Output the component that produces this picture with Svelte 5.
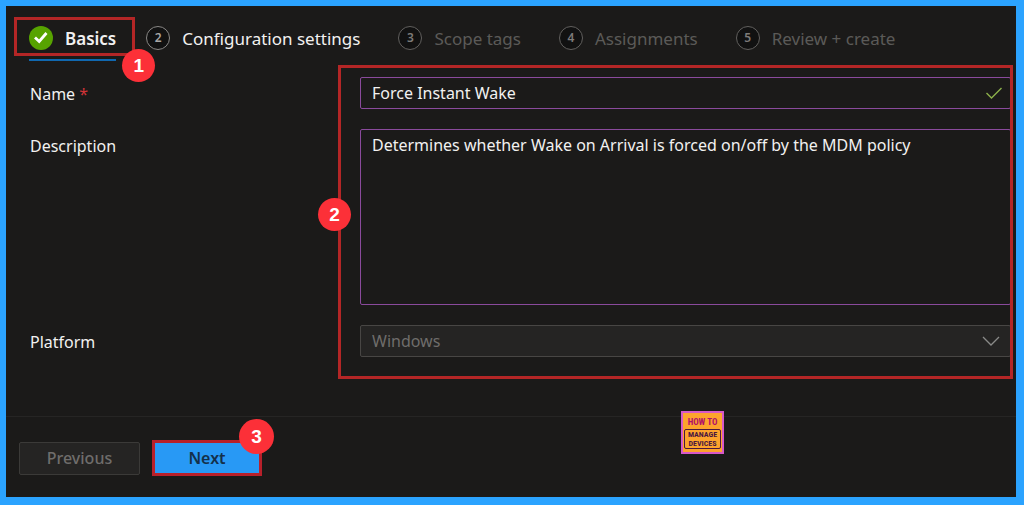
<script lang="ts">
    type Step = { label: string; state: "done" | "open" | "locked" };

    const steps: Step[] = [
        { label: "Basics", state: "done" },
        { label: "Configuration settings", state: "open" },
        { label: "Scope tags", state: "locked" },
        { label: "Assignments", state: "locked" },
        { label: "Review + create", state: "locked" },
    ];

    let name = $state("Force Instant Wake");
    let description = $state("Determines whether Wake on Arrival is forced on/off by the MDM policy");
    let platform = $state("Windows");
</script>

<main class="wizard">
    <nav class="steps">
        {#each steps as step, i}
            <button class="step {step.state}" disabled={step.state === "locked"}>
                {#if step.state === "done"}
                    <svg class="dot" viewBox="0 0 24 24" aria-hidden="true">
                        <circle cx="12" cy="12" r="12" fill="#57a300" />
                        <path d="M6 11.5l4.2 4 7.3-8.5" fill="none" stroke="#fff" stroke-width="2.8" />
                    </svg>
                {:else}
                    <span class="dot number">{i + 1}</span>
                {/if}
                <span class="text">{step.label}</span>
                {#if step.state === "done"}
                    <span class="mark mark-step"><b class="badge">1</b></span>
                {/if}
            </button>
        {/each}
    </nav>

    <form class="form">
        <label for="name">Name <span class="required">*</span></label>
        <div class="field">
            <input id="name" type="text" bind:value={name} />
            <svg class="tick" viewBox="0 0 16 12" aria-hidden="true">
                <path d="M0.5 6l5 5 10-10" fill="none" stroke="#8cb04a" stroke-width="1.4" />
            </svg>
        </div>

        <label for="description">Description</label>
        <textarea id="description" bind:value={description}></textarea>

        <label for="platform">Platform</label>
        <div class="field">
            <select id="platform" bind:value={platform} disabled>
                <option>Windows</option>
            </select>
            <svg class="chevron" viewBox="0 0 18 10" aria-hidden="true">
                <path d="M1 1l8 8 8-8" fill="none" stroke="#8a8a88" stroke-width="1.3" />
            </svg>
        </div>
        <div class="mark mark-form"><b class="badge">2</b></div>
    </form>

    <footer class="footer">
        <button class="btn" disabled>Previous</button>
        <div class="next">
            <button class="btn primary">Next</button>
            <b class="badge">3</b>
        </div>
        <div class="logo">
            <span>HOW TO</span>
            <span class="plate">MANAGE<br />DEVICES</span>
        </div>
    </footer>
</main>

<style>
    :global(body) { margin: 0; background: #2ba3ff; }
    .wizard { box-sizing: border-box; min-height: 100vh; border: solid #2ba3ff; border-width: 6px 8px 8px 6px; background: #1b1a19; color: #f2f1f0; font-family: "Noto Sans", "Open Sans", sans-serif; font-size: 16px; line-height: 24px; }
    button, input, textarea, select { font: inherit; color: inherit; box-sizing: border-box; margin: 0; }

    .steps { display: flex; gap: 38px; padding: 18px 24px 0 23px; font-size: 17px; }
    .step { position: relative; display: flex; align-items: center; gap: 12px; height: 37px; padding: 0 0 10px; border: 0; background: none; white-space: nowrap; }
    .step.done { margin-right: -8px; padding-bottom: 8px; font-weight: 600; border-bottom: 2px solid #1068b0; }
    .step.locked { color: #5b5a58; }
    .text { padding-top: 3px; }
    .dot { box-sizing: border-box; width: 24px; height: 24px; flex: none; }
    .number { border: 1px solid #8a8886; border-radius: 50%; background: #111; color: #a8a6a4; font-size: 12px; font-weight: 600; line-height: 22px; text-align: center; }
    .locked .number { border-color: #62605e; color: #7d7b79; }

    .form { position: relative; display: grid; grid-template-columns: 330px 1fr; row-gap: 20px; padding: 16px 5px 0 24px; }
    .form label { padding-top: 5px; }
    .required { color: #d03438; }
    .field { position: relative; display: flex; }
    input, textarea, select { width: 100%; padding: 3px 11px; border: 1px solid #8a4a9c; border-radius: 2px; background: #1b1a19; outline: 0; }
    input, select { height: 32px; }
    textarea { display: block; height: 176px; resize: none; }
    select { appearance: none; border-color: #484644; background: #252423; color: #6f6d6b; opacity: 1; }
    .tick, .chevron { position: absolute; pointer-events: none; }
    .tick { right: 9px; top: 10px; width: 16px; height: 12px; }
    .chevron { right: 11px; top: 11px; width: 18px; height: 10px; }

    .footer { display: flex; align-items: center; gap: 12px; margin-top: 59px; padding: 23px 13px 20px; border-top: 1px solid #262524; }
    .btn { width: 121px; height: 33px; padding: 0; border: 1px solid #3b3a38; border-radius: 2px; background: #252423; font-weight: 500; line-height: 28px; }
    .btn:disabled { color: #6f6d6b; }
    .btn.primary { display: block; width: 110px; height: 36px; border: 3px solid #b8202a; border-radius: 0; background: #2899f5; color: #14304a; font-weight: 600; }
    .next { position: relative; }

    /* callouts */
    .mark { position: absolute; border: 3px solid #b42626; pointer-events: none; }
    .mark-step { inset: -7px -19px 3px -15px; }
    .mark-form { inset: 4px 3px -22px 332px; }
    .badge { position: absolute; width: 33px; height: 33px; border-radius: 50%; background: #fc3038; color: #fff; font: bold 19px/33px "Liberation Sans", Arial, sans-serif; text-align: center; }
    .mark-step .badge { right: -23px; bottom: -29px; }
    .mark-form .badge { left: -23px; top: 130px; }
    .next .badge { right: -12px; top: -21px; width: 35px; height: 35px; line-height: 35px; }

    .logo { box-sizing: border-box; width: 43px; height: 43px; margin: -29px 0 0 407px; align-self: flex-start; padding: 3px 1px; border: 2px solid #d758c8; background: #fda32c; color: #b0106a; font: bold 9px/12px "Roboto Condensed", Roboto, sans-serif; text-align: center; }
    .logo span { display: block; }
    .logo .plate { margin-top: 1px; border: 1px solid #4a1740; border-radius: 2px; color: #4a1740; font-size: 8px; line-height: 9px; }
</style>
